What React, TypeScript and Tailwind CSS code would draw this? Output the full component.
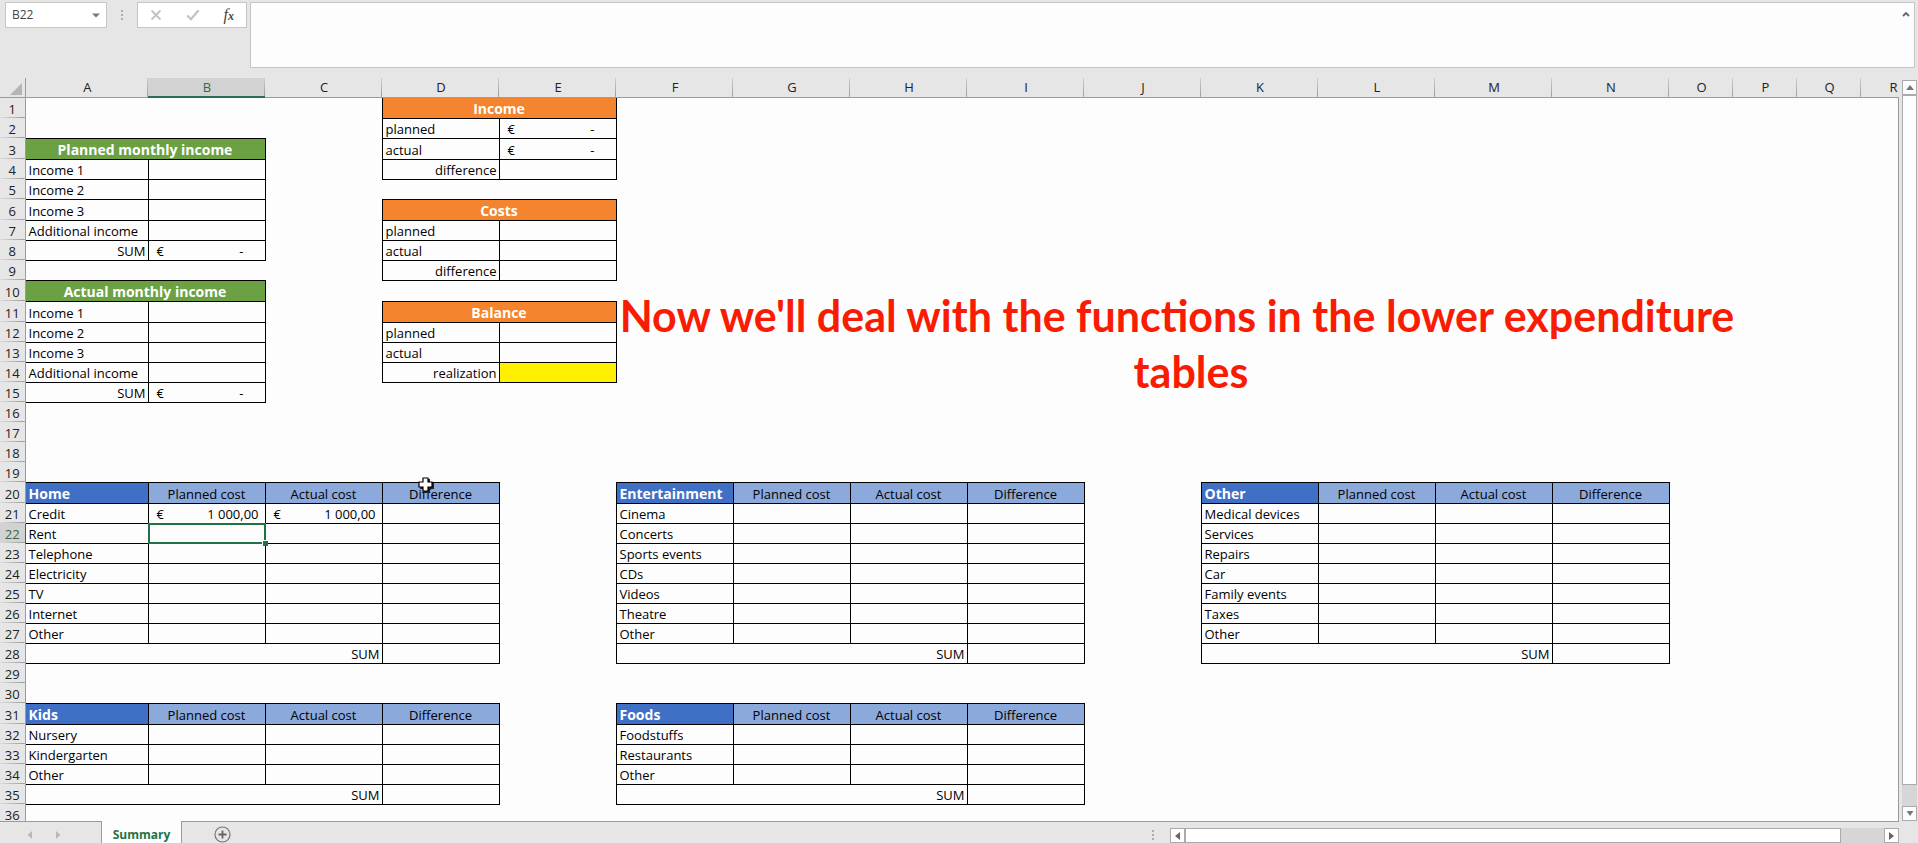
import type { ReactNode } from "react";

type Kind = "label" | "right" | "blank" | "money" | "yellow" | "orange" | "green" | "blue" | "lightBlue";

interface Cell {
  kind: Kind;
  text?: string;
  span?: number;
}

const letters = "ABCDEFGHIJKLMNOPQR".split("");
const colWidths: Record<string, string> = { A: "w-[123px]", O: "w-16", P: "w-16", Q: "w-16", R: "w-16" };
const tallRows = [1, 3, 6, 10, 11, 20, 31];
const rowCount = 36;

const styles: Record<Kind, string> = {
  label: "pr-[2px] pl-[3px] text-left text-[13px]",
  right: "px-[2px] text-right text-[13px]",
  blank: "",
  money: "pl-2 pr-[6px] text-[13px]",
  yellow: "bg-[#fff000]",
  orange: "bg-[#f4842e] text-center text-[14px] font-bold text-white",
  green: "bg-[#6ba143] text-center text-[14px] font-bold text-white",
  blue: "bg-[#4070c5] pr-[2px] pl-[3px] text-left text-[14px] font-bold text-white",
  lightBlue: "bg-[#8ca9dc] text-center text-[13px]",
};

const sheet: Record<string, Cell> = {};

function put(col: string, row: number, cells: Cell[]) {
  let c = letters.indexOf(col);
  for (const cell of cells) {
    sheet[letters[c] + row] = cell;
    c += cell.span ?? 1;
  }
}

function incomeTable(row: number, title: string) {
  put("A", row, [{ kind: "green", text: title, span: 2 }]);
  ["Income 1", "Income 2", "Income 3", "Additional income"].forEach((text, i) =>
    put("A", row + 1 + i, [{ kind: "label", text }, { kind: "blank" }]),
  );
  put("A", row + 5, [{ kind: "right", text: "SUM" }, { kind: "money", text: "-" }]);
}

function summaryTable(row: number, title: string, value: Cell, last: string, result: Cell) {
  put("D", row, [{ kind: "orange", text: title, span: 2 }]);
  put("D", row + 1, [{ kind: "label", text: "planned" }, value]);
  put("D", row + 2, [{ kind: "label", text: "actual" }, value]);
  put("D", row + 3, [{ kind: "right", text: last }, result]);
}

function costTable(col: string, row: number, title: string, items: string[]) {
  put(col, row, [
    { kind: "blue", text: title },
    { kind: "lightBlue", text: "Planned cost" },
    { kind: "lightBlue", text: "Actual cost" },
    { kind: "lightBlue", text: "Difference" },
  ]);
  items.forEach((text, i) =>
    put(col, row + 1 + i, [{ kind: "label", text }, { kind: "blank" }, { kind: "blank" }, { kind: "blank" }]),
  );
  put(col, row + 1 + items.length, [{ kind: "right", text: "SUM", span: 3 }, { kind: "blank" }]);
}

incomeTable(3, "Planned monthly income");
incomeTable(10, "Actual monthly income");
summaryTable(1, "Income", { kind: "money", text: "-" }, "difference", { kind: "blank" });
summaryTable(6, "Costs", { kind: "blank" }, "difference", { kind: "blank" });
summaryTable(11, "Balance", { kind: "blank" }, "realization", { kind: "yellow" });
costTable("A", 20, "Home", ["Credit", "Rent", "Telephone", "Electricity", "TV", "Internet", "Other"]);
costTable("F", 20, "Entertainment", ["Cinema", "Concerts", "Sports events", "CDs", "Videos", "Theatre", "Other"]);
costTable("K", 20, "Other", ["Medical devices", "Services", "Repairs", "Car", "Family events", "Taxes", "Other"]);
costTable("A", 31, "Kids", ["Nursery", "Kindergarten", "Other"]);
costTable("F", 31, "Foods", ["Foodstuffs", "Restaurants", "Other"]);
put("B", 21, [{ kind: "money", text: "1 000,00" }, { kind: "money", text: "1 000,00" }]);

function Money({ text }: { text: string }) {
  return (
    <div className="flex justify-between">
      <span>€</span>
      <span className={text === "-" ? "pr-[15px]" : ""}>{text}</span>
    </div>
  );
}

function Row({ n }: { n: number }) {
  const cells: ReactNode[] = [];
  for (let c = 0; c < letters.length; c++) {
    const key = letters[c] + n;
    const cell = sheet[key];
    if (!cell) {
      cells.push(<td key={key} className="p-0" />);
      continue;
    }
    const selected = key === "B22";
    cells.push(
      <td
        key={key}
        colSpan={cell.span}
        className={`border border-black pt-px pb-0 align-bottom leading-[18px] whitespace-nowrap ${selected ? "relative" : ""} ${styles[cell.kind]}`}
      >
        {cell.kind === "money" ? <Money text={cell.text ?? ""} /> : cell.text}
        {selected && (
          <div className="absolute -inset-px border-2 border-[#217346]">
            <div className="absolute -right-[4px] -bottom-[4px] size-[6px] border-t border-l border-white bg-[#217346]" />
          </div>
        )}
      </td>,
    );
    c += (cell.span ?? 1) - 1;
  }
  const active = n === 22;
  return (
    <tr className={tallRows.includes(n) ? "h-[21px]" : "h-5"}>
      <th
        scope="row"
        className={`border-r bg-[linear-gradient(to_right,#dcdcdc,#9b9b9b)] bg-[length:100%_1px] bg-bottom bg-no-repeat px-0 pt-px pb-0 text-center align-bottom text-[13px] leading-[18px] font-normal ${
          active ? "border-[#217346] bg-[#d2d2d2] text-[#2f6b50]" : "border-[#9b9b9b] bg-[#e6e6e6] text-[#222]"
        }`}
      >
        {n}
      </th>
      {cells}
    </tr>
  );
}

function Dots() {
  return (
    <div className="flex flex-col gap-[2px]" aria-hidden="true">
      <span className="size-[2px] bg-[#ababab]" />
      <span className="size-[2px] bg-[#ababab]" />
      <span className="size-[2px] bg-[#ababab]" />
    </div>
  );
}

function FormulaBar() {
  return (
    <div className="flex h-[78px] shrink-0 items-start pt-[2px] pr-[3px] pl-[5px]">
      <div className="flex h-[26px] w-[102px] items-center border border-[#c6c6c6] bg-white">
        <input
          aria-label="Name box"
          defaultValue="B22"
          className="min-w-0 flex-1 pl-[6px] text-[12px] text-[#444] outline-none"
        />
        <button aria-label="Name list" className="flex h-full w-5 items-center justify-center">
          <svg width="8" height="5" viewBox="0 0 8 5">
            <path d="M0 0.5h8L4 4.5z" fill="#777" />
          </svg>
        </button>
      </div>
      <div className="flex h-[26px] w-[30px] items-center justify-center">
        <Dots />
      </div>
      <div className="flex h-[26px] w-[110px] items-center justify-around border border-[#c6c6c6] bg-white">
        <button aria-label="Cancel">
          <svg width="12" height="12" viewBox="0 0 12 12" className="block">
            <path d="M1.5 1.5l9 9M10.5 1.5l-9 9" stroke="#c2c2c2" strokeWidth="1.8" fill="none" />
          </svg>
        </button>
        <button aria-label="Enter">
          <svg width="14" height="12" viewBox="0 0 14 12" className="block">
            <path d="M1.2 6.5l3.8 3.7L12.6 1.2" stroke="#c2c2c2" strokeWidth="2.2" fill="none" />
          </svg>
        </button>
        <button
          aria-label="Insert function"
          className="font-['Liberation_Serif',serif] text-[16px] leading-5 text-[#444] italic"
        >
          f<span className="text-[12px] font-bold">x</span>
        </button>
      </div>
      <div className="ml-[3px] flex h-[66px] min-w-0 flex-1 border border-[#c6c6c6] bg-[#fdfdfd]">
        <textarea aria-label="Formula" className="min-w-0 flex-1 resize-none p-2 outline-none" />
        <button aria-label="Collapse formula bar" className="flex w-4 justify-center pt-[8px]">
          <svg width="8" height="6" viewBox="0 0 8 6">
            <path d="M1 5l3-3 3 3" stroke="#666" strokeWidth="1.8" fill="none" />
          </svg>
        </button>
      </div>
    </div>
  );
}

function Grid() {
  return (
    <div className="relative min-w-0 flex-1 overflow-hidden bg-[linear-gradient(to_bottom,#e6e6e6_19px,#9b9b9b_19px,#9b9b9b_20px,#fdfdfd_20px)]">
      <table className="w-0 table-fixed border-collapse text-black">
        <colgroup>
          <col className="w-[25px]" />
          {letters.map((l) => (
            <col key={l} className={colWidths[l] ?? "w-[117px]"} />
          ))}
        </colgroup>
        <thead>
          <tr className="h-[19px]">
            <th className="border-r border-b border-[#9b9b9b] bg-[#e6e6e6] p-0">
              <svg width="12" height="12" viewBox="0 0 12 12" className="mt-[3px] mr-[3px] ml-auto block">
                <path d="M12 0v12H0z" fill="#b4b4b4" />
              </svg>
            </th>
            {letters.map((l) => (
              <th
                key={l}
                scope="col"
                className={`bg-[linear-gradient(to_bottom,#d0d0d0,#9b9b9b)] bg-[length:1px_100%] bg-right bg-no-repeat py-0 pr-0 pl-px text-center text-[13px] leading-[17px] font-normal ${
                  l === "B" ? "border-b-2 border-[#2c6e52] bg-[#d2d2d2] text-[#2f6b50]" : "border-b border-[#9b9b9b] bg-[#e6e6e6] text-[#222]"
                }`}
              >
                {l}
              </th>
            ))}
          </tr>
        </thead>
        <tbody>
          {Array.from({ length: rowCount }, (_, i) => (
            <Row key={i} n={i + 1} />
          ))}
        </tbody>
      </table>
      <p className="absolute top-[210px] left-[617px] w-[1148px] text-center font-['Lato','Open_Sans',sans-serif] text-[43px] leading-[56px] font-bold whitespace-nowrap text-[#fa1b03]">
        <span className="block pr-7">Now we'll deal with the functions in the lower expenditure</span>
        <span className="block">tables</span>
      </p>
      <svg width="17" height="17" viewBox="0 0 17 17" className="absolute top-[399px] left-[418px]" aria-hidden="true">
        <path d="M6 2h6v4h4v6h-4v4H6v-4H2V6h4z" fill="#222" />
        <path d="M5 1h5v4h4v5h-4v4H5v-4H1V5h4z" fill="#fff" stroke="#000" strokeWidth="1.2" />
      </svg>
    </div>
  );
}

function VerticalScroll() {
  return (
    <div className="flex w-[19px] shrink-0 flex-col pt-[2px] pr-px pl-[3px]">
      <button aria-label="Scroll up" className="flex h-[15px] items-center justify-center border border-[#ababab] bg-white">
        <svg width="8" height="5" viewBox="0 0 8 5">
          <path d="M0 5h8L4 0z" fill="#777" />
        </svg>
      </button>
      <div className="flex flex-1 flex-col bg-[#d6d6d6] pb-[21px]">
        <div className="flex-1 border border-[#ababab] bg-white" />
      </div>
      <button aria-label="Scroll down" className="flex h-[15px] items-center justify-center border border-[#ababab] bg-white">
        <svg width="8" height="5" viewBox="0 0 8 5">
          <path d="M0.5 0h7L4 5z" fill="#777" />
        </svg>
      </button>
    </div>
  );
}

function SheetBar() {
  return (
    <div className="flex h-[22px] shrink-0">
      <div className="flex min-w-0 flex-1 border-t border-[#9b9b9b]">
        <div className="flex w-[101px] shrink-0 items-center gap-6 pt-[4px] pl-[27px]">
          <button aria-label="Previous sheet">
            <svg width="5" height="8" viewBox="0 0 5 8" className="block">
              <path d="M5 0v8L0.500 4z" fill="#b8b8b8" />
            </svg>
          </button>
          <button aria-label="Next sheet">
            <svg width="5" height="8" viewBox="0 0 5 8" className="block">
              <path d="M0 0v8l4.500-4z" fill="#b8b8b8" />
            </svg>
          </button>
        </div>
        <button className="-mt-px flex w-[81px] shrink-0 items-center justify-center border-x border-[#9b9b9b] bg-[#fdfdfd] pt-[5px] text-[12px] leading-[18px] font-bold text-[#217346]">
          Summary
        </button>
        <button aria-label="New sheet" className="ml-8 flex items-center pt-[4px]">
          <svg width="17" height="17" viewBox="0 0 17 17" className="block">
            <circle cx="8.500" cy="8.500" r="7.500" fill="none" stroke="#777" strokeWidth="1.200" />
            <path d="M8.500 4.500v8M4.500 8.500h8" stroke="#666" strokeWidth="1.800" />
          </svg>
        </button>
        <div className="mr-4 ml-auto flex items-center pt-[4px]">
          <Dots />
        </div>
      </div>
      <div className="flex w-[38%] shrink-0 border-t border-[#9b9b9b] pt-[6px]">
        <button aria-label="Scroll left" className="flex h-[15px] w-[15px] items-center justify-center border border-[#ababab] bg-white">
          <svg width="5" height="8" viewBox="0 0 5 8">
            <path d="M5 0v8L0 4z" fill="#666" />
          </svg>
        </button>
        <div className="flex h-[15px] flex-1 bg-[#d6d6d6] pr-[43px]">
          <div className="flex-1 border border-[#ababab] bg-white" />
        </div>
        <button aria-label="Scroll right" className="flex h-[15px] w-[15px] items-center justify-center border border-[#ababab] bg-white">
          <svg width="5" height="8" viewBox="0 0 5 8">
            <path d="M0 0v8l5-4z" fill="#666" />
          </svg>
        </button>
      </div>
      <div className="w-[19px] shrink-0" />
    </div>
  );
}

export default function App() {
  return (
    <div className="flex h-screen flex-col overflow-hidden bg-[#e6e6e6] font-['Open_Sans',sans-serif]">
      <FormulaBar />
      <div className="flex min-h-0 flex-1">
        <Grid />
        <div className="mt-[19px] w-px shrink-0 bg-[#9b9b9b]" />
        <VerticalScroll />
      </div>
      <SheetBar />
    </div>
  );
}
